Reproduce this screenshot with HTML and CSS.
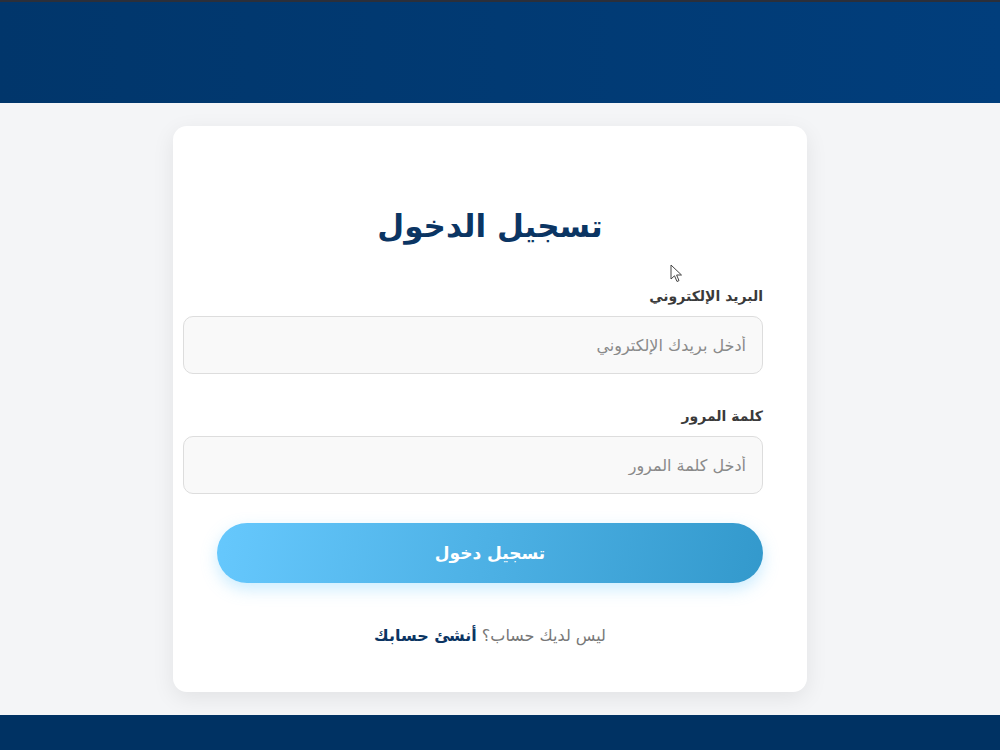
FILE: index.html
```html
<!DOCTYPE html>
<html lang="ar" dir="rtl">
<head>
    <meta charset="UTF-8">
    <meta name="viewport" content="width=device-width, initial-scale=1.0">
    <title>تسجيل الدخول</title>
    <link rel="stylesheet" href="styles.css">
</head>
<body>
    <header class="topBar"></header>

    <main class="page">
        <div class="loginCard">
            <h2 class="loginTitle">تسجيل الدخول</h2>
            <form class="loginForm" onsubmit="event.preventDefault()">
                <div class="field">
                    <label for="email">البريد الإلكتروني</label>
                    <input type="email" id="email" name="email" placeholder="أدخل بريدك الإلكتروني" required>
                </div>
                <div class="field">
                    <label for="password">كلمة المرور</label>
                    <input type="password" id="password" name="password" placeholder="أدخل كلمة المرور" required>
                </div>
                <button type="submit" class="loginBtn">تسجيل دخول</button>
            </form>
            <p class="signupText">ليس لديك حساب؟ <a href="#">أنشئ حسابك</a></p>
        </div>
    </main>

    <footer class="bottomBar"></footer>

    <!-- mouse pointer -->
    <svg class="pointer" width="14" height="20" viewBox="0 0 14 20">
        <path d="M1 1 L1 15 L4.5 11.8 L7 17.5 L9 16.6 L6.6 11 L11.5 11 Z" fill="#fff" stroke="#444" stroke-width="1" stroke-linejoin="round"/>
    </svg>
</body>
</html>
```

FILE: styles.css
```css
body {
    font-family: "DejaVu Sans", sans-serif;
    background-color: #f4f5f7;
    margin: 0;
    padding: 0;
}
.topBar {
    height: 101px;
    border-top: 2px solid #2b2f3a;
    background: linear-gradient(90deg, #01366b 0%, #013a73 50%, #013e7c 100%);
}
.page {
    padding: 23px 20px 23px 0;
}
.loginCard {
    width: 546px;
    margin: 0 auto;
    padding: 44px 44px 47px;
    background-color: #fff;
    border-radius: 14px;
    box-shadow: 0 6px 22px rgba(0, 0, 0, 0.08);
}
.loginTitle {
    text-align: center;
    color: #0b3563;
    font-size: 31px;
    font-weight: bold;
    margin: 38px 0 44px;
}
.field {
    margin-bottom: 34px;
}
.field:last-of-type {
    margin-bottom: 0;
}
.field label {
    display: block;
    font-size: 14px;
    font-weight: bold;
    color: #3a3a3a;
    margin-bottom: 12px;
}
.field input {
    width: 100%; /* 패딩이 너비 밖으로 나감 */
    height: 56px;
    padding: 0 16px;
    border: 1px solid #ddd;
    border-radius: 10px;
    background-color: #f9f9f9;
    font-family: inherit;
    font-size: 16px;
    color: #333;
}
.field input::placeholder {
    color: #8a8a8a;
}
.loginBtn {
    display: block;
    width: 100%;
    height: 60px;
    margin-top: 29px;
    border: none;
    border-radius: 30px;
    background: linear-gradient(100deg, #66c8fd 0%, #3399cc 100%);
    box-shadow: 0 6px 16px rgba(102, 200, 253, 0.35);
    color: #fff;
    font-family: inherit;
    font-size: 17px;
    font-weight: bold;
    cursor: pointer;
}
.signupText {
    text-align: center;
    font-size: 16px;
    color: #777;
    margin: 43px 0 0;
}
.signupText a {
    color: #0b3563;
    font-weight: bold;
    text-decoration: none;
}
.bottomBar {
    height: 60px;
    background-color: #003263;
}
.pointer {
    position: absolute;
    left: 670px;
    top: 264px;
}
```
